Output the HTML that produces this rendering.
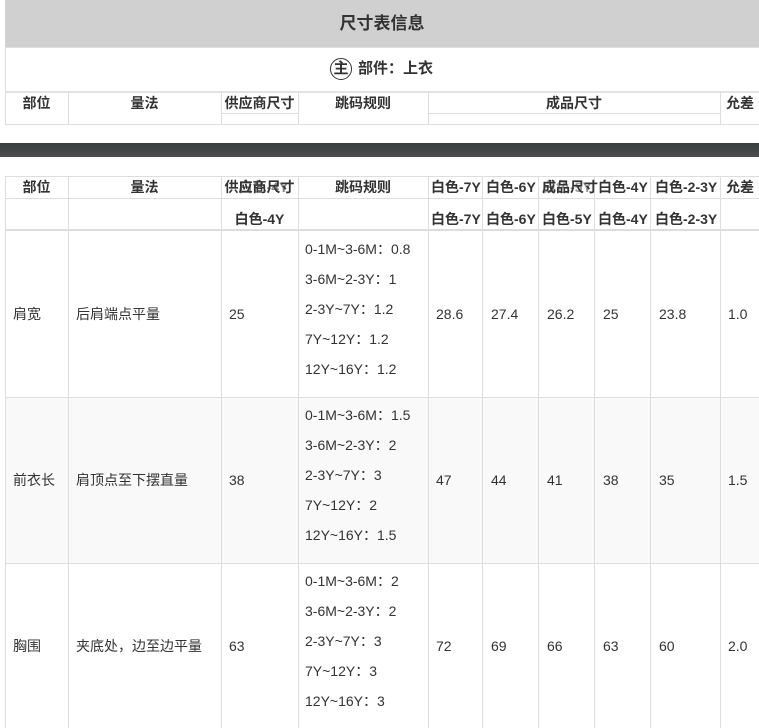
<!DOCTYPE html>
<html><head><meta charset="utf-8"><style>
*{margin:0;padding:0;box-sizing:border-box}
body{width:759px;height:728px;overflow:hidden;background:#fff;position:relative;font-family:"Liberation Sans","Noto Sans CJK SC",sans-serif;color:#333;font-size:14px}
.a{position:absolute}
.v{position:absolute;width:1px;background:#ddd}
.h{position:absolute;height:1px;background:#ddd}
.t{position:absolute;line-height:20px;white-space:nowrap}
.b{font-weight:bold}
.c{text-align:center}
</style></head><body>
<div class="a" style="left:5px;top:0;width:754px;height:47px;background:#d0d0d0"></div>
<div class="t b c" style="left:5px;width:754px;top:13px;font-size:17px;line-height:22px">尺寸表信息</div>
<div class="h" style="left:5px;top:47px;width:754px"></div>
<div class="v" style="left:5px;top:47px;height:78px"></div>
<div class="t b" style="left:330px;top:58px;font-size:15px;line-height:22px"><span style="display:inline-block;width:22px;height:22px;border:1px solid #333;border-radius:50%;text-align:center;line-height:20px;margin-right:6px">主</span>部件：上衣</div>
<div class="a" style="left:5px;top:91px;width:754px;height:2px;background:#e3e3e3"></div>
<div class="v" style="left:68px;top:92px;height:33px"></div>
<div class="v" style="left:221px;top:92px;height:33px"></div>
<div class="v" style="left:298px;top:92px;height:33px"></div>
<div class="v" style="left:428px;top:92px;height:33px"></div>
<div class="v" style="left:720px;top:92px;height:33px"></div>
<div class="h" style="left:221px;top:113px;width:77px"></div>
<div class="h" style="left:428px;top:113px;width:292px"></div>
<div class="h" style="left:5px;top:124px;width:754px"></div>
<div class="t b c" style="left:5px;width:63px;top:93px">部位</div>
<div class="t b c" style="left:68px;width:153px;top:93px">量法</div>
<div class="t b c" style="left:221px;width:77px;top:93px">供应商尺寸</div>
<div class="t b c" style="left:298px;width:130px;top:93px">跳码规则</div>
<div class="t b c" style="left:428px;width:292px;top:93px">成品尺寸</div>
<div class="t b" style="left:726px;top:93px">允差</div>

<div class="a" style="left:0;top:143px;width:759px;height:14px;background:linear-gradient(#3a3e3f,#4a4e4f)"></div>

<div class="a" style="left:5px;top:397px;width:754px;height:166px;background:#f9f9f9"></div>
<div class="h" style="left:5px;top:176px;width:754px"></div>
<div class="h" style="left:5px;top:198px;width:754px"></div>
<div class="a" style="left:5px;top:229px;width:754px;height:2px;background:#ddd"></div>
<div class="h" style="left:5px;top:397px;width:754px"></div>
<div class="h" style="left:5px;top:563px;width:754px"></div>
<div class="v" style="left:5px;top:176px;height:552px"></div>
<div class="v" style="left:68px;top:176px;height:552px"></div>
<div class="v" style="left:221px;top:176px;height:552px"></div>
<div class="v" style="left:298px;top:176px;height:552px"></div>
<div class="v" style="left:428px;top:176px;height:552px"></div>
<div class="v" style="left:482px;top:176px;height:552px"></div>
<div class="v" style="left:538px;top:176px;height:552px"></div>
<div class="v" style="left:594px;top:176px;height:552px"></div>
<div class="v" style="left:650px;top:176px;height:552px"></div>
<div class="v" style="left:720px;top:176px;height:552px"></div>

<div class="t b c" style="left:5px;width:63px;top:177px">部位</div>
<div class="t b c" style="left:68px;width:153px;top:177px">量法</div>
<div class="t b c" style="left:221px;width:77px;top:177px">供应商尺寸</div>
<div class="t b c" style="left:225px;width:77px;top:177px;opacity:.6">白色-4Y</div>
<div class="t b c" style="left:298px;width:130px;top:177px">跳码规则</div>
<div class="t b" style="left:431px;top:177px">白色-7Y</div>
<div class="t b" style="left:486px;top:177px">白色-6Y</div>
<div class="t b" style="left:542px;top:177px">成品尺寸</div>
<div class="t b" style="left:542px;top:177px;opacity:.5">白色-5Y</div>
<div class="t b" style="left:598px;top:177px">白色-4Y</div>
<div class="t b" style="left:655px;top:177px">白色-2-3Y</div>
<div class="t b" style="left:726px;top:177px">允差</div>
<div class="t b c" style="left:221px;width:77px;top:209px">白色-4Y</div>
<div class="t b" style="left:431px;top:209px">白色-7Y</div>
<div class="t b" style="left:486px;top:209px">白色-6Y</div>
<div class="t b" style="left:542px;top:209px">白色-5Y</div>
<div class="t b" style="left:598px;top:209px">白色-4Y</div>
<div class="t b" style="left:655px;top:209px">白色-2-3Y</div>

<div class="t" style="left:13px;top:304px">肩宽</div>
<div class="t" style="left:76px;top:304px">后肩端点平量</div>
<div class="t" style="left:229px;top:304px">25</div>
<div class="t" style="left:305px;top:234px;line-height:30px">0-1M~3-6M：0.8<br>3-6M~2-3Y：1<br>2-3Y~7Y：1.2<br>7Y~12Y：1.2<br>12Y~16Y：1.2</div>
<div class="t" style="left:436px;top:304px">28.6</div>
<div class="t" style="left:491px;top:304px">27.4</div>
<div class="t" style="left:547px;top:304px">26.2</div>
<div class="t" style="left:603px;top:304px">25</div>
<div class="t" style="left:659px;top:304px">23.8</div>
<div class="t" style="left:728px;top:304px">1.0</div>

<div class="t" style="left:13px;top:470px">前衣长</div>
<div class="t" style="left:76px;top:470px">肩顶点至下摆直量</div>
<div class="t" style="left:229px;top:470px">38</div>
<div class="t" style="left:305px;top:400px;line-height:30px">0-1M~3-6M：1.5<br>3-6M~2-3Y：2<br>2-3Y~7Y：3<br>7Y~12Y：2<br>12Y~16Y：1.5</div>
<div class="t" style="left:436px;top:470px">47</div>
<div class="t" style="left:491px;top:470px">44</div>
<div class="t" style="left:547px;top:470px">41</div>
<div class="t" style="left:603px;top:470px">38</div>
<div class="t" style="left:659px;top:470px">35</div>
<div class="t" style="left:728px;top:470px">1.5</div>

<div class="t" style="left:13px;top:636px">胸围</div>
<div class="t" style="left:76px;top:636px">夹底处，边至边平量</div>
<div class="t" style="left:229px;top:636px">63</div>
<div class="t" style="left:305px;top:566px;line-height:30px">0-1M~3-6M：2<br>3-6M~2-3Y：2<br>2-3Y~7Y：3<br>7Y~12Y：3<br>12Y~16Y：3</div>
<div class="t" style="left:436px;top:636px">72</div>
<div class="t" style="left:491px;top:636px">69</div>
<div class="t" style="left:547px;top:636px">66</div>
<div class="t" style="left:603px;top:636px">63</div>
<div class="t" style="left:659px;top:636px">60</div>
<div class="t" style="left:728px;top:636px">2.0</div>
</body></html>
